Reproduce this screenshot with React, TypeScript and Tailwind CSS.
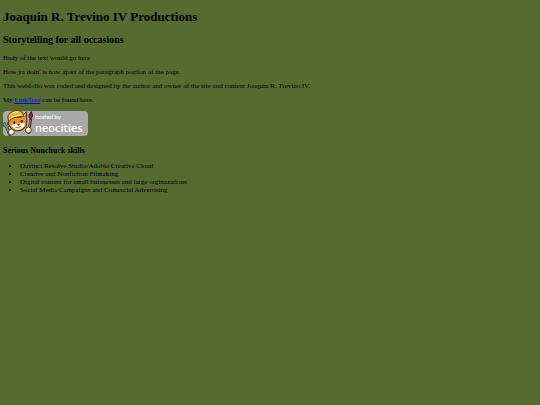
import React from 'react'

const paragraphs = [
  'Body of the text would go here',
  "How ya doin' is now apart of the paragraph portion of the page.",
  'This webfolio was coded and designed by the author and owner of the site and content Joaquin R. Trevino IV.',
]

const skills = [
  'Davinci Resolve Studio/Adobie Creative Cloud',
  'Creative and Nonfiction Filmaking',
  'Digital content for small buisnesses and large orginazations',
  'Social Media Campaigns and Comercial Advertising',
]

function Cat() {
  return (
    <svg viewBox="9 9 90 75" className="h-[25px] w-[30px] shrink-0 overflow-visible" aria-hidden="true">
      {/* wrench */}
      <path d="M19 55l10 24" stroke="#29343a" strokeWidth="9" strokeLinecap="round" />
      <path d="M12 42l1 10 7 4 6-5-1-9" fill="none" stroke="#29343a" strokeWidth="8" />
      <path d="M12 42l1 10 7 4 6-5-1-9" fill="none" stroke="#8ba0a5" strokeWidth="4" />
      <path d="M19 56l10 23" stroke="#7d9299" strokeWidth="5" />
      {/* paint brush */}
      <path d="M92 34L86 74" stroke="#3b2415" strokeWidth="8" strokeLinecap="round" />
      <path d="M91 36l-4 26" stroke="#c69449" strokeWidth="3" />
      <path d="M88 30l-1-9 7-10 4 12-4 8z" fill="#b8232b" stroke="#3a1715" strokeWidth="3" />
      {/* head */}
      <path
        d="M27 30l-2 18 10 15 15 6 16-3 12-11 2-17-1-27-15 16-28 1z"
        fill="#e98c30"
        stroke="#4a2a12"
        strokeWidth="3"
      />
      <path d="M34 52l12-6 8 4 8-5 13 1-2 9-12 9-13 1-9-6z" fill="#fff1d8" />
      <ellipse cx="43" cy="44" rx="3" ry="4" fill="#29180f" />
      <ellipse cx="65" cy="40" rx="3" ry="4" fill="#29180f" />
      <path d="M51 48h9l-4 6z" fill="#7d2d1b" />
      <path d="M47 58q7 4 16-3" fill="none" stroke="#59331d" strokeWidth="2" />
      {/* hard hat */}
      <path
        d="M25 37q-5-16 8-24Q46 4 59 8q10 4 13 17l-16 1-20 5-9 9z"
        fill="#e5b533"
        stroke="#63480f"
        strokeWidth="3"
      />
      <path d="M37 16q8-6 17-4M33 28l30-8" fill="none" stroke="#ffe579" strokeWidth="4" />
      {/* paws */}
      <circle cx="34" cy="72" r="9" fill="#fff3dd" stroke="#5a3a20" strokeWidth="3" />
      <circle cx="85" cy="66" r="9" fill="#fff3dd" stroke="#5a3a20" strokeWidth="3" />
    </svg>
  )
}

function NeocitiesBadge() {
  return (
    <a
      href="https://neocities.org"
      className="flex h-[25px] w-[85px] items-center gap-[2px] rounded-sm bg-[#a9a9a9] text-white"
    >
      <Cat />
      <span className="flex flex-col">
        <span className="font-['Lato',sans-serif] text-[6px] leading-[8px]">hosted by</span>
        <span className="font-['Open_Sans',sans-serif] text-[11px] leading-[14px] font-semibold">
          neocities
        </span>
      </span>
    </a>
  )
}

export default function App() {
  return (
    <main className="min-h-screen bg-[#556b2f] px-[3px] py-[9px] font-['Liberation_Serif',serif] text-[7px] leading-[8px] text-black">
      <h1 className="text-[13px] leading-[16px] font-bold">Joaquin R. Trevino IV Productions</h1>
      <h2 className="mt-[9px] text-[10px] leading-[12px] font-bold">Storytelling for all occasions</h2>
      <div className="mt-2 flex flex-col gap-[6px]">
        {paragraphs.map((text) => (
          <p key={text}>{text}</p>
        ))}
        <p>
          My{' '}
          <a href="#linktree" className="text-[#0000ee] underline">
            LinkTree
          </a>{' '}
          can be found here.
        </p>
      </div>
      <div className="mt-[7px]">
        <NeocitiesBadge />
      </div>
      <h3 className="mt-[10px] text-[8px] leading-[10px] font-bold">Serious Nunchuck skills</h3>
      <ul className="mt-[6px] list-disc pl-[17px]">
        {skills.map((skill) => (
          <li key={skill}>{skill}</li>
        ))}
      </ul>
    </main>
  )
}
